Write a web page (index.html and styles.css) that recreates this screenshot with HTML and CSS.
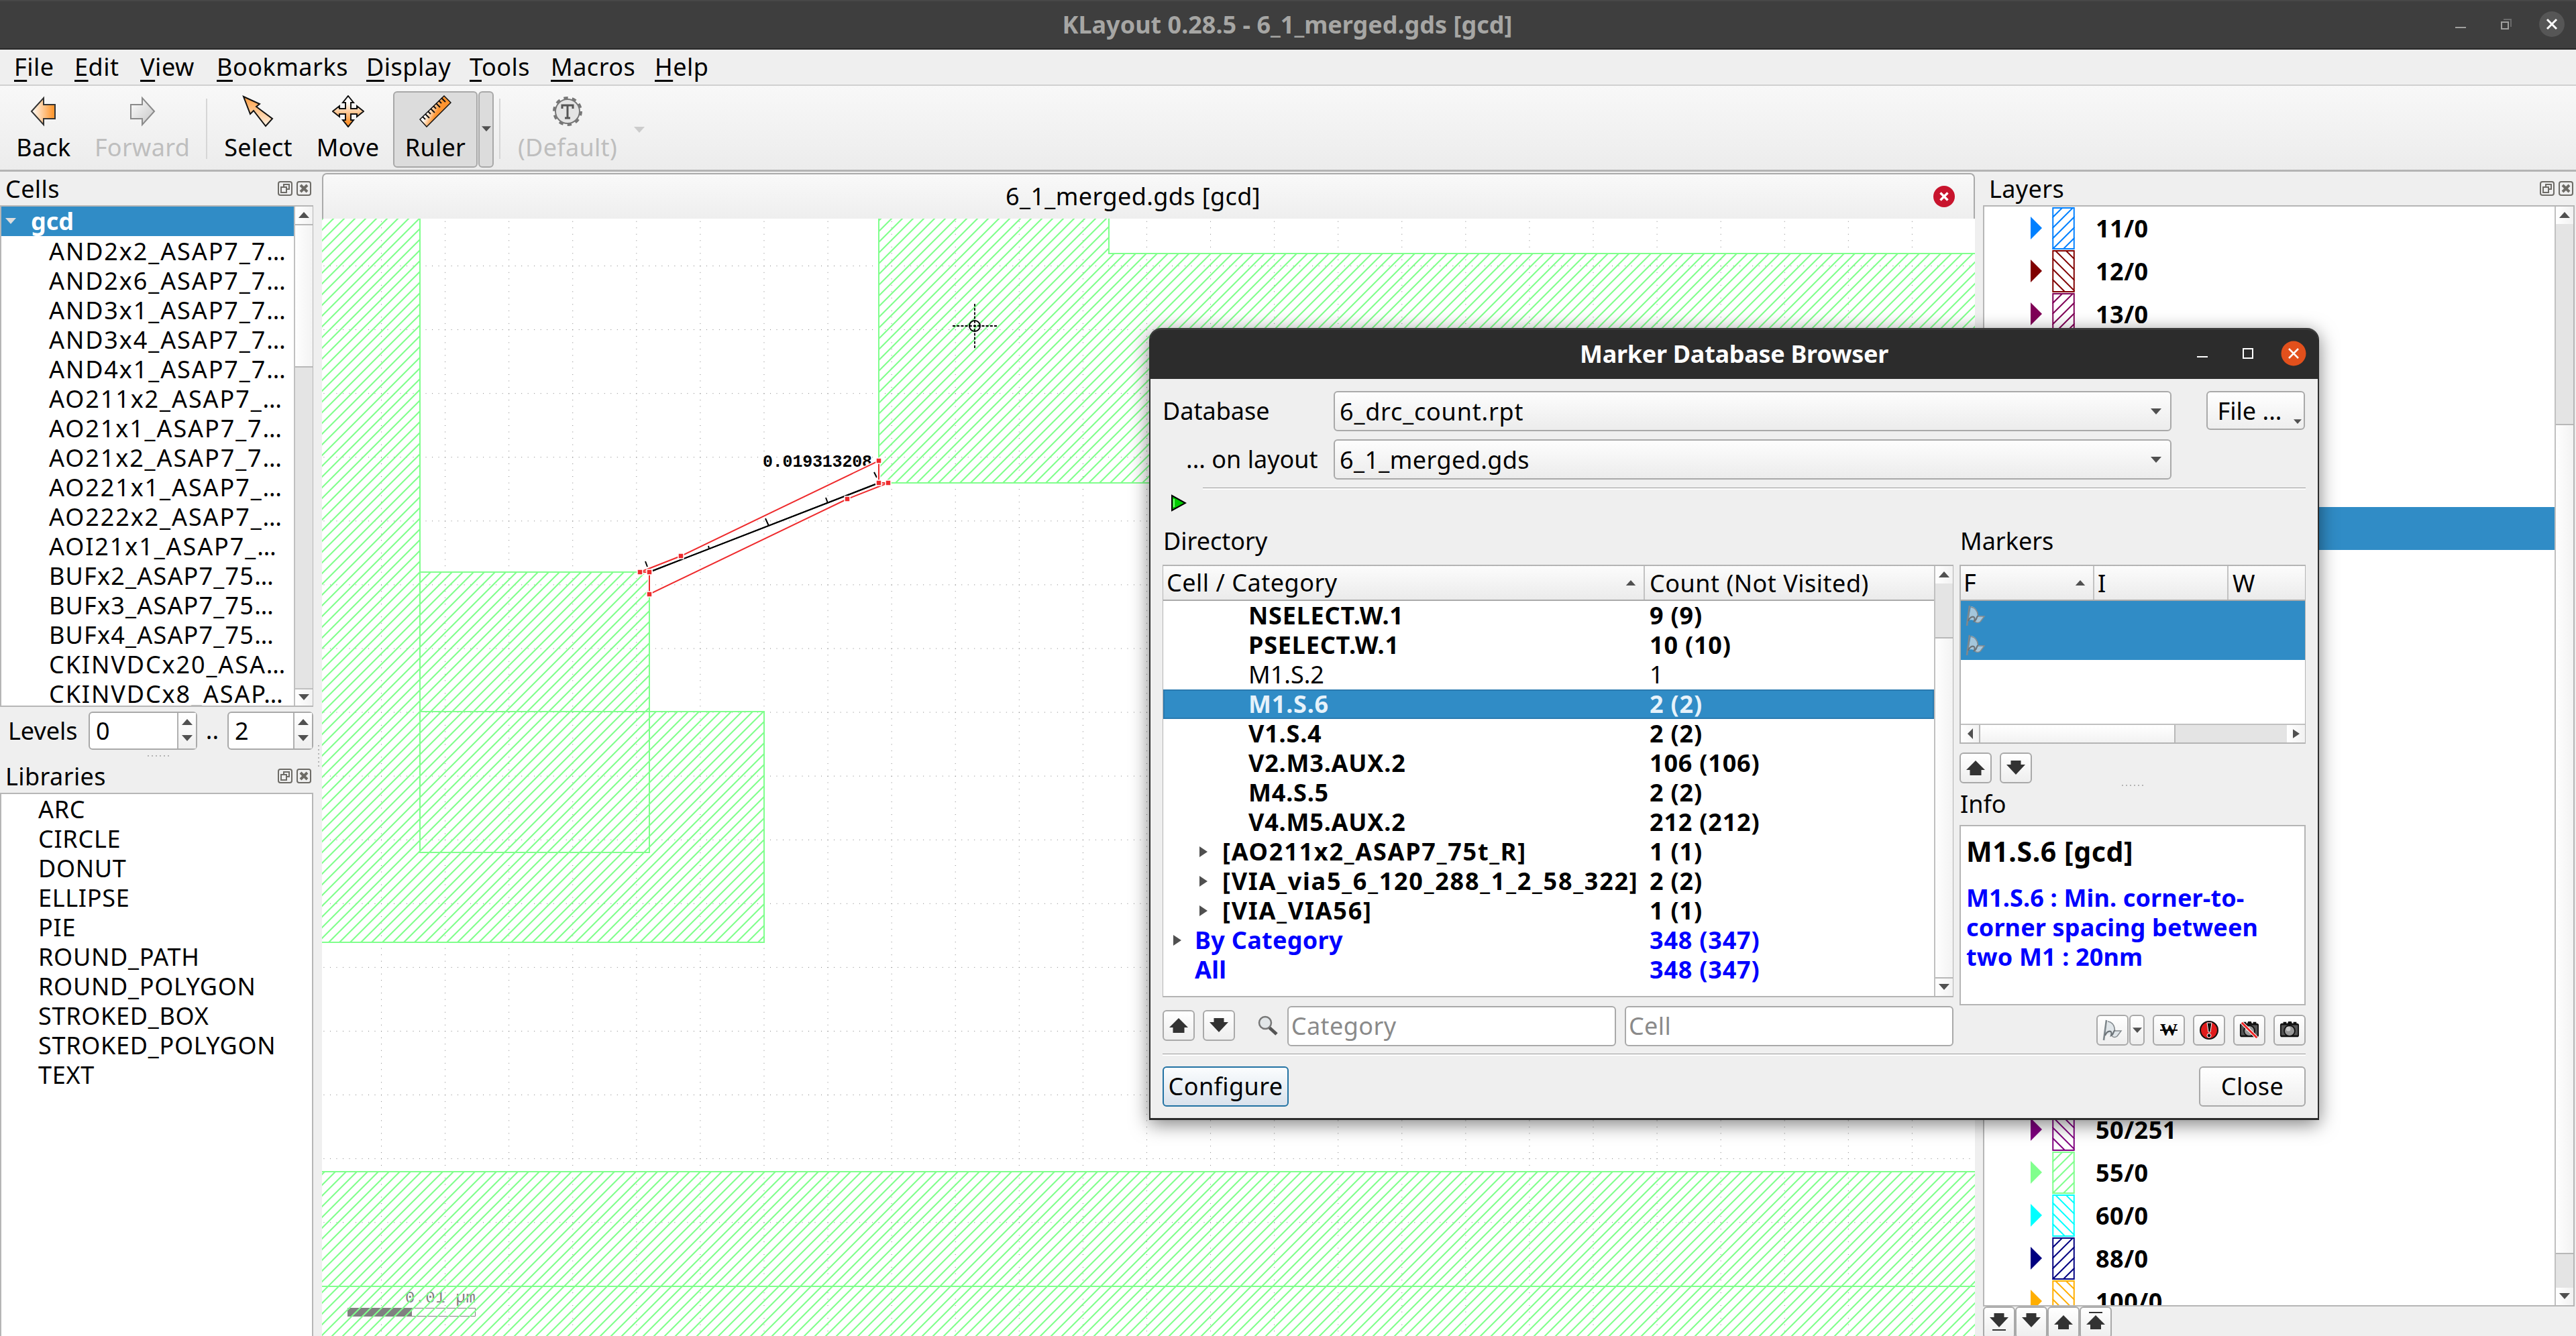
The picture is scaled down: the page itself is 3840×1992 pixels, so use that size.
FILE: index.html
```html
<!DOCTYPE html>
<html lang="en">
<head>
<meta charset="utf-8">
<title>KLayout 0.28.5 - 6_1_merged.gds [gcd]</title>
<link rel="stylesheet" href="styles.css">
</head>
<body>
<svg class="defs" width="0" height="0" aria-hidden="true">
  <defs>
    <linearGradient id="orangeL" x1="0" y1="0" x2="1" y2="0"><stop offset="0" stop-color="#fff"/><stop offset=".9" stop-color="#ff9a35"/></linearGradient>
    <linearGradient id="orangeD" x1="0" y1="0" x2="0" y2="1"><stop offset="0" stop-color="#ff9d40"/><stop offset="1" stop-color="#fff2e4"/></linearGradient>
    <linearGradient id="orangeM" x1="0" y1="0" x2="0" y2="1"><stop offset=".2" stop-color="#fff"/><stop offset=".85" stop-color="#ff9430"/></linearGradient>
    <linearGradient id="grayR" x1="0" y1="0" x2="1" y2="1"><stop offset="0" stop-color="#fff"/><stop offset="1" stop-color="#c4c4c4"/></linearGradient>
    <linearGradient id="orangeR" x1="0" y1="0" x2="1" y2=".5"><stop offset=".4" stop-color="#fff"/><stop offset=".65" stop-color="#ff9430"/></linearGradient>
    <symbol id="swatch-f" viewBox="0 0 34 64"><path d="M1 1h32v62H1zM0 16L16 0M0 32L32 0M0 48L34 14M0 64L34 30M16 64L34 46" fill="#fff" stroke="currentColor" stroke-width="2"/></symbol>
    <symbol id="swatch-b" viewBox="0 0 34 64"><path d="M1 1h32v62H1zM20 0L34 14M4 0L34 30M0 12L34 46M0 28L34 62M0 44L20 64" fill="#fff" stroke="currentColor" stroke-width="2"/></symbol>
    <symbol id="up" viewBox="0 0 30 30"><path d="M15 4L29 18H23.500V26H6.500V18H1z" fill="#333"/></symbol>
    <symbol id="down" viewBox="0 0 30 30"><path d="M7.500 4H22.500V10H29L15 25L1 10H7.500z" fill="#333"/></symbol>
    <symbol id="float" viewBox="0 0 22 22"><rect x="1" y="1" width="20" height="20" rx="3" fill="none" stroke="#6d6b66" stroke-width="2"/><path d="M9 9V5h8v7h-4M5 9h8v8H5z" fill="none" stroke="#6d6b66" stroke-width="2"/></symbol>
    <symbol id="shut" viewBox="0 0 22 22"><rect x="1" y="1" width="20" height="20" rx="3" fill="none" stroke="#6d6b66" stroke-width="2"/><path d="M6 6L16 16M16 6L6 16" stroke="#6d6b66" stroke-width="4"/></symbol>
    <symbol id="flag" viewBox="0 0 30 32"><path d="M8 2C15 3 18 8 18.500 16L28 17L22 25C18 28 13 26 12 23C9 22 6 22 4 24z" fill="#d6dee4" fill-opacity=".7"/><path d="M6 1L2 31" stroke="#7f888d" stroke-width="2.600"/><path d="M8 3C15 4 18 9 18.500 16M18.500 17H28L22 25C18 28 13 26 14 22" fill="none" stroke="#858b8f" stroke-width="1.500"/><path d="M4 24C7 16 16 15 13 24C18 22 15 18 19 16" fill="none" stroke="#6c7378" stroke-width="2.200"/></symbol>
    <symbol id="camera" viewBox="0 0 32 32"><path d="M1 8q0-3 3-3h2V3h5v2h2l1-3h5l1 3h2V3h5v2q4 0 4 3v16q0 3-3 3H4q-3 0-3-3z" fill="#111"/><rect x="3" y="8" width="26" height="16" fill="#555"/><circle cx="16" cy="17" r="8.500" fill="#999" stroke="#111" stroke-width="2"/><circle cx="14" cy="14" r="3.500" fill="#ccc"/></symbol>
    <symbol id="td" viewBox="0 0 16 10"><path d="M0 0H16L8 9z" fill="#505050"/></symbol>
    <symbol id="tu" viewBox="0 0 16 10"><path d="M0 9H16L8 0z" fill="#505050"/></symbol>
    <symbol id="tl" viewBox="0 0 10 16"><path d="M9 0V16L1 8z" fill="#505050"/></symbol>
    <symbol id="tr" viewBox="0 0 12 16"><path d="M0 0V16L12 8z" fill="#505050"/></symbol>
  </defs>
</svg>

<header class="titlebar">
  <h1>KLayout 0.28.5 - 6_1_merged.gds [gcd]</h1>
  <svg class="wmctl" width="180" height="50" viewBox="0 0 180 50"><path d="M0 29h16" stroke="#a0a09e" stroke-width="2"/><path d="M72 17h11v11" fill="none" stroke="#6b6b6b" stroke-width="2"/><path d="M69 21h10v10H69z" fill="none" stroke="#a0a09e" stroke-width="2"/><circle cx="144" cy="24" r="19" fill="#565656"/><path d="M137 17l14 14M151 17l-14 14" stroke="#fff" stroke-width="3"/></svg>
</header>

<nav class="menubar">
  <a class="m1"><u>F</u>ile</a><a class="m2"><u>E</u>dit</a><a class="m3"><u>V</u>iew</a><a class="m4"><u>B</u>ookmarks</a><a class="m5"><u>D</u>isplay</a><a class="m6"><u>T</u>ools</a><a class="m7"><u>M</u>acros</a><a class="m8"><u>H</u>elp</a>
</nav>

<div class="toolbar">
  <div class="tool t-back"><svg width="48" height="48" viewBox="0 0 48 48"><path d="M6 24L24 4V14H41V35H24V44z" fill="url(#orangeL)" stroke="#333" stroke-width="2"/></svg><span>Back</span></div>
  <div class="tool t-fwd off"><svg width="48" height="48" viewBox="0 0 48 48"><path d="M42 24L24 4V14H7V35H24V44z" fill="url(#grayR)" stroke="#8a8a8a" stroke-width="2"/></svg><span>Forward</span></div>
  <i class="sep"></i>
  <div class="tool t-sel"><svg width="48" height="48" viewBox="0 0 48 48"><path d="M2 2L26 13L21 17L45 35L35 46L17 23L12 28z" fill="url(#orangeD)" stroke="#111" stroke-width="2"/></svg><span>Select</span></div>
  <div class="tool t-move"><svg width="48" height="48" viewBox="0 0 48 48"><path d="M24 1L32 11H28V20H37V16L47 24L37 32V28H28V37H32L24 47L16 37H20V28H11V32L1 24L11 16V20H20V11H16z" fill="url(#orangeM)" stroke="#111" stroke-width="2"/></svg><span>Move</span></div>
  <div class="tool t-ruler on"><svg width="48" height="48" viewBox="0 0 48 48"><path d="M1 36L37 1L47 11L11 47z" fill="url(#orangeR)" stroke="#111" stroke-width="1.500"/><path d="M5 32l4 4M9 28l6 6M13 24l4 4M17 20l6 6M21 16l4 4M25 12l6 6M29 8l4 4M33 4l6 6" stroke="#111" stroke-width="2"/></svg><span>Ruler</span></div>
  <div class="drop on"><svg width="14" height="9"><use href="#td"/></svg></div>
  <i class="sep s2"></i>
  <div class="tool t-def off"><svg width="48" height="48" viewBox="0 0 48 48"><circle cx="24" cy="24" r="19.500" fill="none" stroke="#777" stroke-width="5" stroke-dasharray="6.200 6.050"/><circle cx="24" cy="24" r="18" fill="#e4e4e4" stroke="#777" stroke-width="2"/><path d="M16 20v-5h16v5M24 15v19M20 34h8" fill="none" stroke="#555" stroke-width="3"/></svg><span>(Default)</span></div>
  <svg class="offarrow" width="16" height="9"><path d="M0 0H16L8 9z" fill="#ccc"/></svg>
</div>

<main>
  <aside class="left">
    <div class="dock-title"><b>Cells</b><svg width="22" height="22"><use href="#float"/></svg><svg width="22" height="22"><use href="#shut"/></svg></div>
    <div class="tree">
      <ul>
        <li class="root"><svg width="16" height="10" viewBox="0 0 16 10"><path d="M0 0H16L8 9z" fill="#ddd"/></svg>gcd</li>
        <li>AND2x2_ASAP7_7…</li><li>AND2x6_ASAP7_7…</li><li>AND3x1_ASAP7_7…</li><li>AND3x4_ASAP7_7…</li><li>AND4x1_ASAP7_7…</li><li>AO211x2_ASAP7_…</li><li>AO21x1_ASAP7_7…</li><li>AO21x2_ASAP7_7…</li><li>AO221x1_ASAP7_…</li><li>AO222x2_ASAP7_…</li><li>AOI21x1_ASAP7_…</li><li class="buf">BUFx2_ASAP7_75…</li><li class="buf">BUFx3_ASAP7_75…</li><li class="buf">BUFx4_ASAP7_75…</li><li>CKINVDCx20_ASA…</li><li>CKINVDCx8_ASAP…</li>
      </ul>
      <div class="vscroll"><span class="sb"><svg width="16" height="10"><use href="#tu"/></svg></span><span class="thumb cells-thumb"></span><span class="track"></span><span class="sb"><svg width="16" height="10"><use href="#td"/></svg></span></div>
    </div>
    <div class="levels"><label>Levels</label>
      <div class="spin w1"><span>0</span><i><svg width="16" height="10"><use href="#tu"/></svg><svg width="16" height="10"><use href="#td"/></svg></i></div>
      <em>..</em>
      <div class="spin w2"><span>2</span><i><svg width="16" height="10"><use href="#tu"/></svg><svg width="16" height="10"><use href="#td"/></svg></i></div>
    </div>
    <div class="grip"></div>
    <div class="dock-title libs"><b>Libraries</b><svg width="22" height="22"><use href="#float"/></svg><svg width="22" height="22"><use href="#shut"/></svg></div>
    <ul class="liblist"><li>ARC</li><li>CIRCLE</li><li>DONUT</li><li>ELLIPSE</li><li>PIE</li><li>ROUND_PATH</li><li>ROUND_POLYGON</li><li>STROKED_BOX</li><li>STROKED_POLYGON</li><li>TEXT</li></ul>
  </aside>
  <div class="vgrip"></div>

  <section class="view">
    <div class="tab"><span>6_1_merged.gds [gcd]</span><svg width="34" height="34" viewBox="0 0 34 34"><circle cx="17" cy="17" r="16" fill="#c8142d"/><path d="M11.500 11.500L22.500 22.500M22.500 11.500L11.500 22.500" stroke="#fff" stroke-width="3.500"/></svg></div>
    <svg class="canvas" width="2464" height="1666" viewBox="480 326 2464 1666">
      <defs>
        <pattern id="hatch" width="16" height="16" patternUnits="userSpaceOnUse"><path d="M-3 10L10-3M4 19L19 4" stroke="#80ff8c" stroke-width="2.100"/></pattern>
        <pattern id="gridv" x="568" y="320.235" width="95.080" height="9.508" patternUnits="userSpaceOnUse"><rect width="1" height="1" fill="#808080"/></pattern>
        <pattern id="gridh" x="568" y="396" width="9.508" height="95.080" patternUnits="userSpaceOnUse"><rect width="1" height="1" fill="#808080"/></pattern>
      </defs>
      <rect x="480" y="326" width="2464" height="1666" fill="#fff"/>
      <rect x="480" y="326" width="2464" height="1666" fill="url(#gridv)"/>
      <rect x="480" y="326" width="2464" height="1666" fill="url(#gridh)"/>
      <path d="M518 1950h96v13h-96z" fill="#808080"/><path d="M614 1950.500h94.500v12H614" fill="none" stroke="#808080"/>
      <text class="scale" x="604" y="1942" textLength="105">0.01 µm</text>
      <g fill="url(#hatch)">
        <path d="M480 326H626V853H968V1061H1139V1405H480z"/>
        <path d="M1310 326H1653V378H2944V720H1310z"/>
        <path d="M480 1747H2944V1992H480z"/>
      </g>
      <path d="M626 326V1271H968V853H626M626 1061H1139V1405H480M1310 326V720H2944M1653 326V378H2944M480 1747H2944M480 1918H2944" fill="none" stroke="#80ff8c" stroke-width="2"/>
      <text class="measure" x="1137" y="696" textLength="163">0.019313208</text>
      <path d="M973 851L1305 722M962 837L965 845M1056 814L1057 818M1141 773L1146 784M1231 742L1234 750M1303 704L1307 712" stroke="#000" stroke-width="2" fill="none"/>
      <path d="M954 853L1015 829L1310 687V720H1324L1263 744L968 886V853z" fill="none" stroke="#fff" stroke-width="5"/>
      <path d="M973 851L1305 722" stroke="#000" stroke-width="2"/>
      <path d="M954 853L1015 829L1310 687V720H1324L1263 744L968 886V853z" fill="none" stroke="#ee2a2c" stroke-width="2"/>
      <path d="M950 849h8v8h-8zM964 849h8v8h-8zM1011 825h8v8h-8zM1306 683h8v8h-8zM1306 716h8v8h-8zM1320 716h8v8h-8zM1259 740h8v8h-8zM964 882h8v8h-8z" fill="#ee2a2c" stroke="#fff" stroke-width="1.500"/>
      <circle cx="1453" cy="486" r="8" fill="none" stroke="#000" stroke-width="2"/>
      <path d="M1420 486H1486M1453 453V519" stroke="#000" stroke-width="1.800" stroke-dasharray="4 2.200"/>
    </svg>
  </section>

  <aside class="right">
    <div class="dock-title"><b>Layers</b><svg width="22" height="22"><use href="#float"/></svg><svg width="22" height="22"><use href="#shut"/></svg></div>
    <div class="layers">
      <ul>
        <li class="c11"><svg width="17" height="34" viewBox="0 0 17 34"><path d="M0 0L17 17L0 34z" fill="currentColor"/></svg><svg width="34" height="63"><use href="#swatch-f"/></svg><span>11/0</span></li>
        <li class="c12"><svg width="17" height="34" viewBox="0 0 17 34"><path d="M0 0L17 17L0 34z" fill="currentColor"/></svg><svg width="34" height="63"><use href="#swatch-b"/></svg><span>12/0</span></li>
        <li class="c13"><svg width="17" height="34" viewBox="0 0 17 34"><path d="M0 0L17 17L0 34z" fill="currentColor"/></svg><svg width="34" height="63"><use href="#swatch-f"/></svg><span>13/0</span></li>
        <li class="gap4"></li>
        <li class="picked"></li>
        <li class="gap13"></li>
        <li class="c50"><svg width="17" height="34" viewBox="0 0 17 34"><path d="M0 0L17 17L0 34z" fill="currentColor"/></svg><svg width="34" height="63"><use href="#swatch-b"/></svg><span>50/251</span></li>
        <li class="c55"><svg width="17" height="34" viewBox="0 0 17 34"><path d="M0 0L17 17L0 34z" fill="currentColor"/></svg><svg width="34" height="63"><use href="#swatch-f"/></svg><span>55/0</span></li>
        <li class="c60"><svg width="17" height="34" viewBox="0 0 17 34"><path d="M0 0L17 17L0 34z" fill="currentColor"/></svg><svg width="34" height="63"><use href="#swatch-b"/></svg><span>60/0</span></li>
        <li class="c88"><svg width="17" height="34" viewBox="0 0 17 34"><path d="M0 0L17 17L0 34z" fill="currentColor"/></svg><svg width="34" height="63"><use href="#swatch-f"/></svg><span>88/0</span></li>
        <li class="c100"><svg width="17" height="34" viewBox="0 0 17 34"><path d="M0 0L17 17L0 34z" fill="currentColor"/></svg><svg width="34" height="63"><use href="#swatch-b"/></svg><span>100/0</span></li>
      </ul>
      <div class="vscroll"><span class="sb"><svg width="16" height="10"><use href="#tu"/></svg></span><span class="track lt"></span><span class="thumb grow"></span><span class="track lb"></span><span class="sb"><svg width="16" height="10"><use href="#td"/></svg></span></div>
    </div>
    <div class="order">
      <span class="btn"><svg width="30" height="36" viewBox="0 0 30 36"><path d="M7.500 4H22.500V10H29L15 25L1 10H7.500z" fill="#333"/><path d="M5 29H25" stroke="#333" stroke-width="2"/></svg></span>
      <span class="btn"><svg width="30" height="36" viewBox="0 0 30 36"><path d="M7.500 4H22.500V10H29L15 25L1 10H7.500z" fill="#333"/></svg></span>
      <span class="btn"><svg width="30" height="36" viewBox="0 0 30 36"><path d="M15 7L29 21H23V28H7V21H1z" fill="#333"/></svg></span>
      <span class="btn"><svg width="30" height="36" viewBox="0 0 30 36"><path d="M15 7L29 21H23V28H7V21H1z" fill="#333"/><path d="M5 3H25" stroke="#333" stroke-width="2"/></svg></span>
    </div>
  </aside>
</main>

<div class="dialog">
  <header><h2>Marker Database Browser</h2>
    <svg class="dctl" width="170" height="50" viewBox="0 0 170 50"><path d="M3 30h16" stroke="#fff" stroke-width="2"/><path d="M72 18h14v14H72z" fill="none" stroke="#fff" stroke-width="2"/><circle cx="147" cy="25" r="18.500" fill="#e2501c"/><path d="M140 18l14 14M154 18l-14 14" stroke="#fff" stroke-width="2.500"/></svg>
  </header>
  <div class="source">
    <label>Database</label><div class="combo"><span class="db">6_drc_count.rpt</span><svg width="16" height="10"><use href="#td"/></svg></div><div class="btn file">File ...<svg width="12" height="8"><use href="#td"/></svg></div>
    <label class="ind">... on layout</label><div class="combo"><span>6_1_merged.gds</span><svg width="16" height="10"><use href="#td"/></svg></div>
  </div>
  <div class="play"><svg width="24" height="26" viewBox="0 0 24 26"><path d="M2 2L22 13L2 24z" fill="#0c0" stroke="#000" stroke-width="2"/><path d="M5 7V19" stroke="#7f7" stroke-width="2"/></svg><hr></div>
  <div class="panes">
    <section class="dir">
      <h3>Directory</h3>
      <div class="table">
        <div class="tbody">
          <div class="thead"><span class="k">Cell / Category<svg width="16" height="9"><use href="#tu"/></svg></span><span class="v">Count (Not Visited)</span></div>
          <div class="row l2 b"><span class="k">NSELECT.W.1</span><span class="v">9 (9)</span></div>
          <div class="row l2 b"><span class="k">PSELECT.W.1</span><span class="v">10 (10)</span></div>
          <div class="row l2"><span class="k">M1.S.2</span><span class="v">1</span></div>
          <div class="row l2 b sel"><span class="k">M1.S.6</span><span class="v">2 (2)</span></div>
          <div class="row l2 b"><span class="k">V1.S.4</span><span class="v">2 (2)</span></div>
          <div class="row l2 b"><span class="k">V2.M3.AUX.2</span><span class="v">106 (106)</span></div>
          <div class="row l2 b"><span class="k">M4.S.5</span><span class="v">2 (2)</span></div>
          <div class="row l2 b"><span class="k">V4.M5.AUX.2</span><span class="v">212 (212)</span></div>
          <div class="row l1 b"><span class="k"><svg width="12" height="16"><use href="#tr"/></svg>[AO211x2_ASAP7_75t_R]</span><span class="v">1 (1)</span></div>
          <div class="row l1 b"><span class="k"><svg width="12" height="16"><use href="#tr"/></svg>[VIA_via5_6_120_288_1_2_58_322]</span><span class="v">2 (2)</span></div>
          <div class="row l1 b"><span class="k"><svg width="12" height="16"><use href="#tr"/></svg>[VIA_VIA56]</span><span class="v">1 (1)</span></div>
          <div class="row l0 b blue"><span class="k"><svg width="12" height="16"><use href="#tr"/></svg>By Category</span><span class="v">348 (347)</span></div>
          <div class="row l0 b blue"><span class="k"><svg width="12" height="16"></svg>All</span><span class="v">348 (347)</span></div>
        </div>
        <div class="vscroll"><span class="sb"><svg width="16" height="10"><use href="#tu"/></svg></span><span class="track dt"></span><span class="thumb grow"></span><span class="sb"><svg width="16" height="10"><use href="#td"/></svg></span></div>
      </div>
      <div class="filter">
        <span class="btn sq"><svg width="30" height="30"><use href="#up"/></svg></span><span class="btn sq"><svg width="30" height="30"><use href="#down"/></svg></span>
        <svg class="mag" width="32" height="32" viewBox="0 0 32 32"><path d="M18 18L29 28" stroke="#555" stroke-width="5"/><circle cx="12" cy="11" r="9" fill="#e2e6e8" stroke="#777" stroke-width="2.500"/></svg>
        <span class="input ca">Category</span><span class="input ce">Cell</span>
      </div>
    </section>
    <section class="mk">
      <h3>Markers</h3>
      <div class="mtable">
        <div class="thead"><span class="f">F<svg width="16" height="9"><use href="#tu"/></svg></span><span class="i">I</span><span class="w">W</span></div>
        <div class="mrow"><svg width="30" height="32"><use href="#flag"/></svg></div>
        <div class="mrow"><svg width="30" height="32"><use href="#flag"/></svg></div>
        <div class="blank"></div>
        <div class="hscroll"><span class="sb"><svg width="10" height="16"><use href="#tl"/></svg></span><span class="thumb"></span><span class="track"></span><span class="sb"><svg width="10" height="14"><use href="#tr"/></svg></span></div>
      </div>
      <div class="nav"><span class="btn sq"><svg width="30" height="30"><use href="#up"/></svg></span><span class="btn sq"><svg width="30" height="30"><use href="#down"/></svg></span></div>
      <div class="grip g2"></div>
      <h3 class="inf">Info</h3>
      <div class="info"><h4>M1.S.6 [gcd]</h4><p>M1.S.6 : Min. corner-to-<br>corner spacing between<br>two M1 : 20nm</p></div>
      <div class="acts">
        <span class="btn sq"><svg width="30" height="32"><use href="#flag"/></svg></span><span class="btn dd"><svg width="14" height="9"><use href="#td"/></svg></span>
        <span class="btn sq w">W</span>
        <span class="btn sq"><svg width="30" height="30" viewBox="0 0 30 30"><circle cx="15" cy="15" r="13" fill="#e01b1b" stroke="#111" stroke-width="2"/><path d="M12 4h7l-2 14h-3z" fill="#111" stroke="#fff" stroke-width="1"/><circle cx="15" cy="23" r="3" fill="#111" stroke="#fff"/></svg></span>
        <span class="btn sq"><svg width="30" height="30" viewBox="0 0 32 32"><use href="#camera" width="32" height="32"/><path d="M4 4L28 28" stroke="#fff" stroke-width="5"/><path d="M4 4L28 28" stroke="#f02020" stroke-width="3"/></svg></span>
        <span class="btn sq"><svg width="30" height="30"><use href="#camera"/></svg></span>
      </div>
    </section>
  </div>
  <hr class="line">
  <footer><span class="btn cfg">Configure</span><span class="btn cls">Close</span></footer>
</div>
</body>
</html>
```
FILE: styles.css
```css
* { box-sizing: border-box; }
body {
  margin: 0; width: 3840px; height: 1992px; overflow: hidden; position: relative;
  display: grid; grid-template-rows: 74px 54px 128px 1fr;
  background: #efefef; color: #000;
  font: 36px/44px "Noto Sans", "Open Sans", sans-serif;
  white-space: nowrap;
}
ul { list-style: none; margin: 0; padding: 0; }
h1, h2, h3, h4, p, hr { margin: 0; }
svg { display: block; flex: none; }
.defs { position: absolute; }

.titlebar { position: relative; background: #3e3e3e; border-top: 2px solid #484848; border-bottom: 2px solid #2a2a2a; display: flex; justify-content: center; align-items: center; }
.titlebar h1 { font-size: 36px; line-height: 44px; font-weight: 700; color: #a6a6a4; padding-right: 2px; }
.wmctl { position: absolute; left: 3660px; top: 10px; }

.menubar { display: flex; height: 54px; border-bottom: 2px solid #d0d0d0; padding: 1px 0 0 21px; line-height: 50px; letter-spacing: .5px; }
.menubar u { text-decoration-thickness: 3px; text-underline-offset: 6px; text-decoration-skip-ink: none; }
.m1 { width: 90px; } .m2 { width: 98px; } .m3 { width: 114px; } .m4 { width: 223px; } .m5 { width: 154px; } .m6 { width: 121px; } .m7 { width: 155px; }

.toolbar { display: flex; background: linear-gradient(#f8f8f8, #ececec); border-bottom: 3px solid #b4b4b4; padding: 8px 0 3px; }
.tool { display: flex; flex-direction: column; align-items: center; padding-top: 6px; }
.tool span { line-height: 44px; margin-top: 8px; letter-spacing: .3px; }
.off { color: #bebebe; }
.t-back { width: 130px; } .t-fwd { width: 164px; }
.sep { width: 2px; height: 90px; background: #d6d6d6; margin: 11px 12px 0 13px; }
.sep.s2 { margin: 11px 12px 0 8px; }
.t-sel { width: 128px; } .t-move { width: 136px; padding-left: 3px; }
.on { background: #dcdcdc; border: 2px solid #a8a8a8; border-radius: 6px; height: 114px; }
.t-ruler { width: 126px; padding-top: 4px; margin-left: 1px; }
.drop { width: 23px; display: flex; justify-content: center; padding-top: 50px; margin-left: 1px; }
.t-def { width: 176px; }
.offarrow { margin: 53px 0 0 11px; }

main { display: grid; grid-template-columns: 467px 13px 2464px 1fr; height: 1736px; }
.left, .right { display: flex; flex-direction: column; min-width: 0; }
.dock-title { height: 50px; display: flex; align-items: center; gap: 6px; padding: 0 3px 0 8px; flex: none; }
.dock-title b { font-weight: 400; flex: 1; line-height: 52px; padding-top: 2px; letter-spacing: .4px; }
.tree { height: 748px; border: 2px solid #b6b6b6; border-width: 2px 1px 2px 2px; background: #fff; display: flex; overflow: hidden; flex: none; }
.tree ul { flex: 1; overflow: hidden; }
.tree li { height: 44px; line-height: 46px; padding-left: 71px; letter-spacing: 1.900px; }
.tree .buf { letter-spacing: 1.200px; }
.tree .root { background: #308cc6; color: #fff; font-weight: 700; padding-left: 6px; display: flex; gap: 22px; align-items: center; letter-spacing: 0; }
.vscroll { width: 28px; border-left: 2px solid #c0c0c0; display: flex; flex-direction: column; flex: none; background: #fff; }
.sb { height: 26px; display: flex; align-items: center; justify-content: center; background: linear-gradient(90deg, #fff, #f2f2f2); flex: none; }
.thumb { background: linear-gradient(90deg, #fefefe, #f3f3f3); border: 1px solid #b8b8b8; border-width: 2px 0; }
.track { flex: 1; background: #e4e4e4; }
.cells-thumb { height: 214px; flex: none; }
.tree .vscroll .sb:last-child { border-top: 2px solid #c0c0c0; }
.grow { flex: 1; }
.levels { height: 70px; padding: 7px 0 7px 12px; display: flex; flex: none; align-items: center; }
.levels label { width: 120px; padding-top: 2px; }
.levels em { font-style: normal; width: 45px; text-align: center; }
.spin { height: 57px; background: #fff; border: 2px solid #a9a9a9; border-radius: 6px; display: flex; align-items: center; justify-content: space-between; padding-left: 9px; line-height: 52px; }
.spin span { padding-top: 1px; }
.w1 { width: 162px; } .w2 { width: 128px; }
.spin i { width: 28px; height: 53px; border-left: 2px solid #b0b0b0; background: linear-gradient(#fff, #efefef); display: flex; flex-direction: column; justify-content: center; align-items: center; gap: 14px; }
.grip { width: 34px; height: 2px; margin: 2px auto 0 220px; background: repeating-linear-gradient(90deg, #b4b4b4 0 2px, transparent 2px 6px); flex: none; }
.libs { height: 54px; padding-top: 3px; }
.liblist { flex: 1; background: #fff; border: 2px solid #b6b6b6; border-bottom: 0; }
.liblist li { padding-left: 55px; height: 44px; line-height: 46px; letter-spacing: .7px; }
.vgrip { width: 2px; height: 34px; margin: 855px 0 0 7px; background: repeating-linear-gradient(#b4b4b4 0 2px, transparent 2px 6px); }

.view { display: flex; flex-direction: column; }
.tab { height: 68px; margin-top: 2px; border: 2px solid #aaa; border-bottom: 0; border-radius: 7px 7px 0 0; background: linear-gradient(#f9f9f9, #eee); display: flex; align-items: center; padding: 0 27px 0 61px; }
.tab span { flex: 1; text-align: center; margin-right: 24px; letter-spacing: .4px; }
.tab svg { margin-left: 22px; }
.measure { font: bold 25px "Liberation Mono", monospace; }
.scale { font: 24px "Liberation Mono", monospace; fill: #808080; }

.right { padding-left: 12px; }
.right .dock-title { padding-left: 9px; padding-right: 4px; }
.layers { height: 1642px; background: #fff; border: 2px solid #b6b6b6; width: 882px; display: flex; overflow: hidden; flex: none; }
.layers ul { flex: 1; }
.layers li { height: 64px; display: flex; align-items: center; padding: 0 0 1px 69px; }
.layers li svg + svg { margin: 1px 31px 0 15px; }
.layers li span { color: #000; font-weight: 700; letter-spacing: .5px; padding-top: 2px; }
.layers .gap4 { height: 256px; } .layers .gap13 { height: 832px; }
.layers .picked { background: #308cc6; }
.c11 { color: #0080ff; } .c12 { color: #800000; } .c13 { color: #800057; } .c50 { color: #800080; } .c55 { color: #80ff8d; } .c60 { color: #0ff; } .c88 { color: #000080; } .c100 { color: #ffae00; }
.lt { height: 298px; flex: none; } .lb { height: 50px; flex: none; }
.order { display: flex; }
.btn { display: flex; align-items: center; justify-content: center; border: 2px solid #a9a9a9; border-radius: 6px; background: linear-gradient(#fff, #eee); }
.order .btn { width: 48px; height: 48px; margin-top: 0; }

.dialog { position: absolute; left: 1713px; top: 489px; width: 1744px; height: 1181px; background: #efefef; border: 2px solid #2c2c2c; border-width: 0 2px 3px; border-radius: 18px 18px 0 0; box-shadow: 0 6px 28px rgba(0,0,0,.5); display: flex; flex-direction: column; padding: 0 18px; }
.dialog > header { margin: 0 -18px; height: 76px; background: #2c2c2c; border-top: 3px solid #3a3a3a; border-radius: 16px 16px 0 0; display: flex; align-items: center; justify-content: center; position: relative; flex: none; }
.dialog h2 { font-size: 36px; line-height: 44px; color: #fff; letter-spacing: -.3px; padding-bottom: 2px; }
.dctl { position: absolute; left: 1557px; top: 10px; }
.source { display: grid; grid-template-columns: 255px 1249px 52px 147px; grid-template-rows: 60px 60px; row-gap: 12px; margin-top: 18px; flex: none; }
.source label { padding-top: 8px; } .source .ind { padding-left: 35px; }
.combo { border: 2px solid #a9a9a9; border-radius: 6px; background: linear-gradient(#fdfdfd, #ececec); display: flex; align-items: center; justify-content: space-between; padding: 1px 13px 0 7px; letter-spacing: .4px; }
.db { letter-spacing: .8px; }
.file { grid-column: 4; height: 58px; position: relative; padding: 2px 18px 0 0; }
.file svg { position: absolute; right: 3px; bottom: 6px; }
.play { height: 48px; position: relative; margin-top: 11px; display: flex; align-items: flex-start; padding: 11px 0 0 12px; flex: none; }
.play hr { flex: 1; margin: -10px 0 0 24px; }
hr { border: 0; height: 3px; background: linear-gradient(#999 1px, #fff 1px); flex: none; }
.panes { display: flex; gap: 9px; height: 774px; flex: none; margin-top: 11px; }
.dir { width: 1179px; } .mk { flex: 1; min-width: 0; }
h3 { font-weight: 400; font-size: 36px; line-height: 44px; height: 57px; padding: 0 0 0 1px; }
.table { height: 645px; border: 2px solid #b4b4b4; border-width: 2px 1px 2px; background: #fff; display: flex; }
.tbody { flex: 1; }
.thead { height: 52px; display: flex; background: linear-gradient(#fcfcfc, #ebebeb); border-bottom: 2px solid #aaa; line-height: 52px; letter-spacing: .5px; }
.k { width: 718px; display: flex; align-items: center; }
.thead .k { border-right: 2px solid #c2c2c2; justify-content: space-between; padding: 0 11px 0 5px; }
.v { padding-left: 7px; }
.row { display: flex; height: 44px; }
.l2 .k { padding-left: 127px; } .l1 .k { padding-left: 54px; gap: 22px; } .l0 .k { padding-left: 15px; gap: 20px; }
.b { font-weight: 700; letter-spacing: .8px; }
.l1 .k { letter-spacing: 1.750px; }
.l0 .k { letter-spacing: .3px; }
.sel { background: #308cc6; color: #e6f2fa; outline: 2px solid #2a7ab0; outline-offset: -2px; }
.blue { color: #00f; }
.dt { height: 80px; flex: none; }
.filter { display: flex; align-items: center; height: 60px; margin-top: 13px; }
.sq { width: 48px; height: 46px; }
.filter .sq { margin-right: 12px; margin-bottom: 2px; }
.mag { margin: 0 13px 0 21px; }
.input { background: #fff; border: 2px solid #a9a9a9; border-radius: 6px; color: #8a8a8a; height: 60px; line-height: 56px; padding-left: 4px; letter-spacing: .4px; }
.ca { width: 491px; margin-right: 13px; } .ce { width: 491px; }
.mtable { height: 267px; width: 516px; border: 2px solid #b4b4b4; border-width: 2px 1px 2px 2px; background: #fff; display: flex; flex-direction: column; }
.f { width: 199px; border-right: 2px solid #c2c2c2; display: flex; align-items: center; justify-content: space-between; padding: 0 11px 0 4px; }
.i { width: 200px; border-right: 2px solid #c2c2c2; padding-left: 5px; } .mtable .w { padding-left: 6px; }
.mrow { height: 44px; background: #308cc6; padding: 6px 0 0 7px; }
.blank { flex: 1; }
.hscroll { display: flex; height: 28px; border-top: 2px solid #c0c0c0; }
.hscroll .sb { width: 27px; height: 26px; }
.hscroll .thumb { width: 293px; border-width: 0 2px; background: linear-gradient(#fff, #f2f2f2); }
.nav { display: flex; gap: 12px; padding-top: 13px; }
.g2 { margin: 2px 0 0 242px; }
.inf { padding-top: 5px; height: 63px; }
.info { height: 269px; width: 516px; background: #fff; border: 2px solid #b4b4b4; padding: 12px 0 0 8px; margin-top: -5px; }
.info h4 { font-size: 41px; line-height: 50px; letter-spacing: .6px; }
.info p { color: #00f; font-weight: 700; margin-top: 23px; letter-spacing: .150px; font-size: 36px; }
.acts { display: flex; justify-content: flex-end; gap: 12px; margin-top: 14px; }
.dd { width: 23px; height: 46px; margin-left: -11px; }
.acts .w { font: bold 26px/40px "Liberation Serif", serif; text-decoration: line-through; text-decoration-thickness: 2px; }
.line { margin-top: 12px; }
footer { display: flex; justify-content: space-between; margin-top: 16px; }
footer .btn { height: 60px; }
.cfg { width: 188px; border-color: #2272a3; background: linear-gradient(#fbfdfe, #d9e2ec); letter-spacing: .4px; }
.cls { width: 159px; letter-spacing: .4px; }
```
